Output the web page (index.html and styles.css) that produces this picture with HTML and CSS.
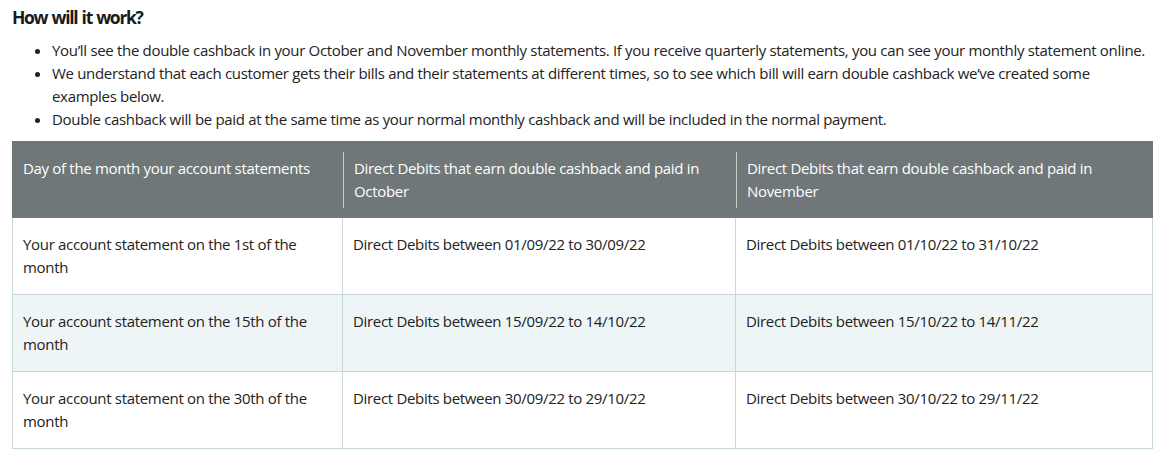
FILE: index.html
```html
<!DOCTYPE html>
<html lang="en">
<head>
<meta charset="utf-8">
<title>How will it work?</title>
<link rel="stylesheet" href="styles.css">
</head>
<body>
<main class="page">
  <h2 class="title">How will it work?</h2>
  <ul class="points">
    <li>You’ll see the double cashback in your October and November monthly statements. If you receive quarterly statements, you can see your monthly statement online.</li>
    <li>We understand that each customer gets their bills and their statements at different times, so to see which bill will earn double cashback we’ve created some examples below.</li>
    <li>Double cashback will be paid at the same time as your normal monthly cashback and will be included in the normal payment.</li>
  </ul>
  <table class="grid">
    <thead>
      <tr>
        <th class="c1"><div class="hd">Day of the month your account statements</div></th>
        <th class="c2"><div class="hd sep">Direct Debits that earn double cashback and paid in October</div></th>
        <th class="c3"><div class="hd sep">Direct Debits that earn double cashback and paid in November</div></th>
      </tr>
    </thead>
    <tbody>
      <tr>
        <td>Your account statement on the 1st of the month</td>
        <td>Direct Debits between 01/09/22 to 30/09/22</td>
        <td>Direct Debits between 01/10/22 to 31/10/22</td>
      </tr>
      <tr class="alt">
        <td>Your account statement on the 15th of the month</td>
        <td>Direct Debits between 15/09/22 to 14/10/22</td>
        <td>Direct Debits between 15/10/22 to 14/11/22</td>
      </tr>
      <tr>
        <td>Your account statement on the 30th of the month</td>
        <td>Direct Debits between 30/09/22 to 29/10/22</td>
        <td>Direct Debits between 30/10/22 to 29/11/22</td>
      </tr>
    </tbody>
  </table>
</main>
</body>
</html>
```

FILE: styles.css
```css
* { box-sizing: border-box; }
html, body { margin: 0; padding: 0; background: #ffffff; }
body {
  font-family: "Open Sans", "Noto Sans", sans-serif;
  color: #222222;
  font-size: 15px;
  line-height: 23px;
  letter-spacing: -0.32px;
}
.page {
  padding: 0 10px 0 12px;
}
.title {
  margin: 0;
  padding-top: 4px;
  font-size: 17.5px;
  line-height: 26px;
  font-weight: 700;
  color: #1a1a1a;
  letter-spacing: -1.3px;
  word-spacing: 1px;
}
.points {
  margin: 9px 0 10px 0;
  padding-left: 40px;
}
.points li {
  margin: 0;
}
.grid {
  width: 1140px;
  border-collapse: collapse;
  table-layout: fixed;
}
.grid .c1 { width: 330px; }
.grid .c2 { width: 393px; }
.grid .c3 { width: 417px; }
.grid th {
  background: #6f7779;
  color: #ffffff;
  font-weight: 400;
  text-align: left;
  vertical-align: top;
  padding: 10px 0 9px;
  border: 1px solid #6f7779;
}
.grid .hd {
  padding: 5px 10px;
  min-height: 55px;
}
.grid .hd.sep {
  border-left: 1px solid #c4c9ca;
}
.grid td {
  border: 1px solid #c9d6db;
  padding: 15px 10px;
  vertical-align: top;
  height: 77px;
}
.grid tr.alt td {
  background: #edf5f7;
}
```
